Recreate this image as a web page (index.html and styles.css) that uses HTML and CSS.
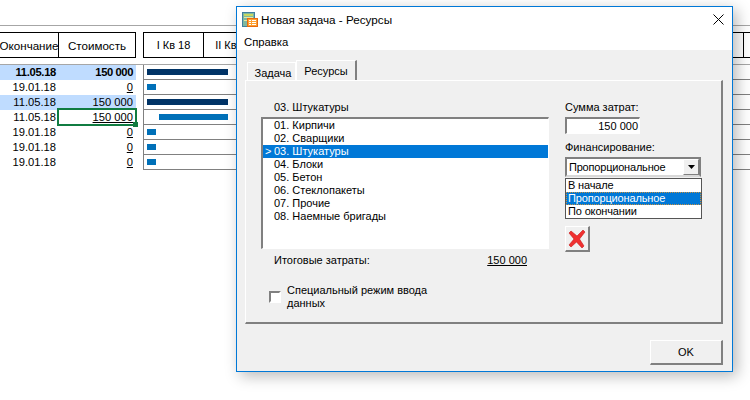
FILE: index.html
```html
<!DOCTYPE html>
<html lang="ru">
<head>
<meta charset="utf-8">
<title>Новая задача - Ресурсы</title>
<link rel="stylesheet" href="styles.css">
</head>
<body>
<div class="sheet">
  <div class="head">
    <div class="head-left">
      <div class="hcell end">Окончание</div>
      <div class="hcell cost">Стоимость</div>
    </div>
    <div class="head-right">
      <div class="qcell">I Кв 18</div><div class="qcell">II Кв 18</div><div class="qcell"></div><div class="qcell"></div><div class="qcell"></div><div class="qcell"></div><div class="qcell"></div><div class="qcell"></div><div class="qcell"></div><div class="qcell"></div><div class="qcell tail"></div>
    </div>
  </div>
  <div class="rows">
    <div class="row"><div class="data tint bold"><span class="d">11.05.18</span><span class="c">150 000</span></div><div class="gantt"><i class="bar dark"></i></div></div>
    <div class="row"><div class="data"><span class="d">19.01.18</span><span class="c u">0</span></div><div class="gantt"><i class="bar short"></i></div></div>
    <div class="row"><div class="data tint"><span class="d">11.05.18</span><span class="c">150 000</span></div><div class="gantt"><i class="bar dark"></i></div></div>
    <div class="row"><div class="data"><span class="d">11.05.18</span><span class="c u sel">150 000<b class="handle"></b></span></div><div class="gantt"><i class="bar long"></i></div></div>
    <div class="row"><div class="data"><span class="d">19.01.18</span><span class="c u">0</span></div><div class="gantt"><i class="bar short"></i></div></div>
    <div class="row"><div class="data"><span class="d">19.01.18</span><span class="c u">0</span></div><div class="gantt"><i class="bar short"></i></div></div>
    <div class="row"><div class="data"><span class="d">19.01.18</span><span class="c u">0</span></div><div class="gantt"><i class="bar short"></i></div></div>
  </div>
</div>

<div class="dialog">
  <div class="titlebar">
    <svg class="appicon" width="16" height="16" viewBox="0 0 16 16">
      <rect x="0.5" y="0.5" width="12" height="14" fill="#7fb8a0" stroke="#3f7f9f"/>
      <rect x="2" y="2" width="9" height="2" fill="#c8d860"/>
      <rect x="2" y="5" width="9" height="1" fill="#e8e8a0"/>
      <rect x="2" y="8" width="4" height="1" fill="#e8e8a0"/>
      <rect x="5.500" y="6.500" width="10" height="8" fill="#ffa030" stroke="#e86a10"/>
      <rect x="7" y="8" width="2" height="1" fill="#fff"/><rect x="10" y="8" width="4" height="1" fill="#fff"/>
      <rect x="7" y="10" width="2" height="1" fill="#fff"/><rect x="10" y="10" width="4" height="1" fill="#fff"/>
      <rect x="7" y="12" width="2" height="1" fill="#fff"/><rect x="10" y="12" width="4" height="1" fill="#fff"/>
    </svg>
    <span class="title">Новая задача - Ресурсы</span>
    <svg class="close" width="11" height="11" viewBox="0 0 11 11"><path d="M0.500 0.500L10.500 10.500M10.500 0.500L0.500 10.500" stroke="#000" fill="none"/></svg>
  </div>
  <div class="menubar">Справка</div>
  <div class="client">
    <div class="tabs">
      <div class="tab">Задача</div>
      <div class="tab active">Ресурсы</div>
    </div>
    <div class="panel">
      <div class="left">
        <div class="label indent">03. Штукатуры</div>
        <div class="listbox">
          <div class="item">01. Кирпичи</div>
          <div class="item">02. Сварщики</div>
          <div class="item current"><span class="marker">&gt;</span>03. Штукатуры</div>
          <div class="item">04. Блоки</div>
          <div class="item">05. Бетон</div>
          <div class="item">06. Стеклопакеты</div>
          <div class="item">07. Прочие</div>
          <div class="item">08. Наемные бригады</div>
        </div>
        <div class="total"><span>Итоговые затраты:</span><span class="u">150 000</span></div>
        <div class="special">
          <span class="check"></span>
          <span class="special-text">Специальный режим ввода данных</span>
        </div>
      </div>
      <div class="right">
        <div class="label">Сумма затрат:</div>
        <div class="sum">150 000</div>
        <div class="label fin">Финансирование:</div>
        <div class="combo">
          <span class="combo-text">Пропорциональное</span>
          <span class="arrow"><svg width="7" height="4" viewBox="0 0 7 4"><path d="M0 0H7L3.500 4Z" fill="#000"/></svg></span>
          <div class="drop">
            <div class="opt">В начале</div>
            <div class="opt on">Пропорциональное</div>
            <div class="opt">По окончании</div>
          </div>
        </div>
        <div class="del">
          <svg width="18" height="18" viewBox="0 0 18 18"><path d="M1 3L3 1L9 6L15 0L17 2L11.500 9L16 16L14 18L8.500 12L3 17L1 15L6 9Z" fill="#f03030" stroke="#c81818" stroke-width="0.6"/></svg>
        </div>
      </div>
    </div>
    <div class="footer"><div class="ok">OK</div></div>
  </div>
</div>
</body>
</html>
```
FILE: styles.css
```css
html, body { margin: 0; padding: 0; }
body {
  width: 750px; height: 400px; overflow: hidden; background: #fff; position: relative;
  font-family: "Liberation Sans", Arial, sans-serif; font-size: 11px; color: #000;
}
.sheet { padding-top: 25px; }
.head {
  display: flex; gap: 7px; border-top: 1px solid #a6a6a6; padding-top: 6px; height: 25px; white-space: nowrap;
}
.head-left { display: flex; width: 136px; flex: none; border-top: 1px solid #000; border-bottom: 1px solid #000; border-right: 1px solid #000; box-sizing: border-box; height: 26px; }
.hcell { display: flex; align-items: center; justify-content: center; box-sizing: border-box; font-size: 11.6px; }
.end { width: 59px; border-right: 1px solid #000; }
.cost { flex: 1; }
.head-right { display: flex; flex: 1; min-width: 0; border-top: 1px solid #000; border-bottom: 1px solid #000; height: 26px; box-sizing: border-box; }
.qcell { width: 60px; box-sizing: border-box; border-left: 1px solid #000; display: flex; align-items: center; justify-content: center; flex: none; }
.qcell.tail { width: 7px; }
.rows { margin-top: 7px; border-top: 1px solid #a6a6a6; width: 750px; }
.row { display: flex; height: 15px; gap: 7px; }
.data { width: 136px; flex: none; display: flex; box-sizing: border-box; height: 15px; line-height: 15px; font-size: 11.2px; }
.tint { background: #bfdcff; }
.bold { font-weight: bold; }
.bold .c { letter-spacing: -.4px; }
.bold .d { letter-spacing: -.3px; }
.d { width: 58px; box-sizing: border-box; text-align: right; margin-left: -2px; margin-right: 2px; }
.c { flex: 1; text-align: right; padding-right: 3px; position: relative; box-sizing: border-box; }
.u { text-decoration: underline; }
.sel { outline: 2px solid #107c41; outline-offset: -1px; height: 16px; margin-top: -1px; padding-top: 1px; }
.handle { position: absolute; right: -2px; bottom: -2px; width: 5px; height: 5px; background: #107c41; }
.gantt { flex: 1; border-left: 1px solid #808080; border-bottom: 1px solid #808080; box-sizing: border-box; display: flex; align-items: center; padding-left: 3px; }
.bar { display: block; height: 6px; background: #0070b8; }
.dark { width: 81px; background: #003366; }
.short { width: 9px; }
.long { width: 69px; margin-left: 12px; }

.dialog {
  position: absolute; left: 236px; top: 6px; width: 497px; height: 366px; box-sizing: border-box;
  border: 1px solid #0078d7; background: #f0f0f0; box-shadow: 4px 4px 14px rgba(0,0,0,.28);
  display: flex; flex-direction: column;
}
.titlebar { display: flex; align-items: center; height: 25px; background: #fff; padding: 0 8px 0 5px; flex: none; }
.appicon { flex: none; }
.title { margin-left: 3px; flex: 1; font-size: 11.7px; }
.menubar { height: 18px; line-height: 20px; background: #fff; padding-left: 7px; flex: none; font-size: 11.3px; }
.client { flex: 1; padding: 10px 9px 0 8px; display: flex; flex-direction: column; }
.tabs { display: flex; align-items: flex-end; height: 20px; padding-left: 2px; }
.tab { width: 49px; height: 18px; box-sizing: border-box; border: 1px solid #fff; border-bottom: 0; padding-left: 3px; text-align: center; line-height: 20px; }
.tab.active { width: 61px; height: 20px; padding-left: 0; border-right: 2px solid #808080; line-height: 21px; }
.panel {
  height: 244px; box-sizing: border-box; border-top: 1px solid #fff; border-left: 1px solid #fff;
  border-right: 2px solid #808080; border-bottom: 2px solid #808080;
  display: flex; padding: 19px 0 0 15px;
}
.left { width: 288px; margin-right: 16px; flex: none; }
.label { height: 17px; line-height: 15px; }
.indent { padding-left: 13px; }
.listbox {
  height: 132px; box-sizing: border-box; background: #fff;
  border-top: 2px solid #808080; border-left: 2px solid #808080; border-right: 1px solid #fff; border-bottom: 1px solid #fff;
}
.item { height: 13px; line-height: 13px; padding-left: 11px; position: relative; }
.current { background: #0078d7; color: #fff; }
.marker { position: absolute; left: 2px; top: 0; }
.total { display: flex; justify-content: space-between; padding: 4px 22px 0 13px; line-height: 14px; }
.special { display: flex; margin-top: 17px; padding-left: 8px; }
.check { width: 12px; height: 12px; box-sizing: border-box; background: #fff; border: 2px solid #808080; border-right-color: #fff; border-bottom-color: #fff; margin-top: 7px; flex: none; }
.special-text { width: 150px; margin-left: 6px; line-height: 13px; }
.right { width: 137px; flex: none; }
.sum {
  width: 75px; height: 17px; box-sizing: border-box; background: #fff; text-align: right; padding-right: 1px; line-height: 15px;
  border-top: 2px solid #808080; border-left: 2px solid #808080; border-right: 1px solid #fff; border-bottom: 1px solid #fff;
}
.fin { margin-top: 6px; }
.combo {
  position: relative; width: 136px; height: 20px; box-sizing: border-box; background: #fff; display: flex; align-items: center; padding-left: 2px;
  border: 2px solid #808080; border-bottom-color: #d8d8d8; white-space: nowrap;
}
.combo-text { letter-spacing: -.2px; }
.arrow { position: absolute; right: 0; top: 0; width: 16px; height: 16px; background: #f0f0f0; display: flex; align-items: center; justify-content: center; border: 1px solid #fff; border-right-color: #808080; border-bottom-color: #808080; box-sizing: border-box; }
.drop { position: absolute; left: -2px; top: 19px; width: 137px; box-sizing: border-box; background: #fff; border: 1px solid #555; letter-spacing: -.15px; }
.opt { height: 13px; line-height: 13px; padding-left: 2px; }
.on { background: #0078d7; color: #fff; outline: 1px dotted #c89040; outline-offset: -1px; }
.del {
  margin-top: 49px; width: 25px; height: 26px; box-sizing: border-box; display: flex; align-items: center; justify-content: center;
  background: #f0f0f0; border: 1px solid #fff; border-right: 2px solid #808080; border-bottom: 2px solid #808080;
}
.footer { display: flex; justify-content: flex-end; padding-top: 16px; }
.ok {
  width: 73px; height: 25px; box-sizing: border-box; text-align: center; line-height: 22px;
  border: 1px solid #fff; border-right: 2px solid #808080; border-bottom: 2px solid #808080;
}
```
